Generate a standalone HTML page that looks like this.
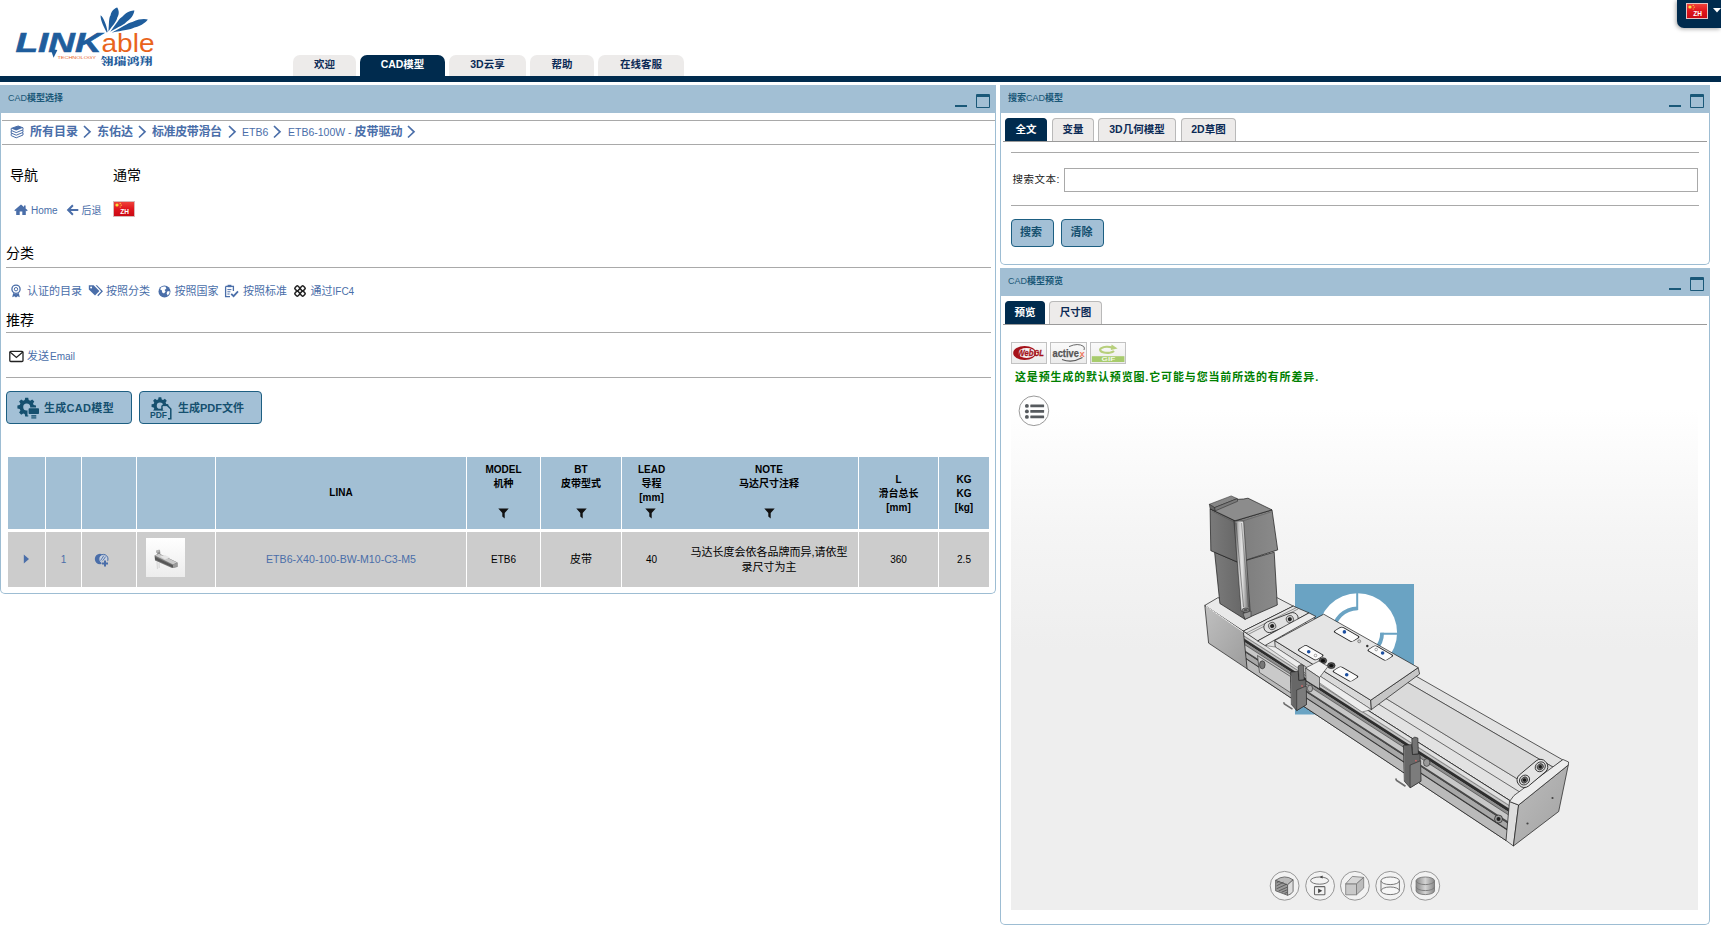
<!DOCTYPE html>
<html lang="zh-CN">
<head>
<meta charset="utf-8">
<title>CAD模型选择</title>
<style>
*{box-sizing:border-box;margin:0;padding:0}
html,body{width:1721px;height:927px;overflow:hidden;background:#fff}
body{position:relative;font-family:"Liberation Sans","Noto Sans CJK SC",sans-serif;font-size:11px;color:#000}
.abs{position:absolute}
a{color:#4a6ea9;text-decoration:none}
/* top */
#rule{left:0;top:76px;width:1721px;height:6px;background:#002b4e}
.mtab{top:55px;height:21px;background:#edebea;border-radius:7px 7px 0 0;color:#0b2a55;font-weight:bold;font-size:10.5px;text-align:center;line-height:19px}
.mtab.on{background:#002b4e;color:#fff;height:22px}
#lang{left:1677px;top:0;width:44px;height:28px;background:#002b4e;border-radius:0 0 0 7px;box-shadow:-1px 1px 4px rgba(0,0,0,.35)}
/* panels */
.panel{border:1px solid #9dbdd3;border-top:none;border-radius:0 0 5px 5px;background:#fff}
.phead{height:28px;background:#a2bfd4;color:#1a5878;font-size:9px;line-height:27px;padding-left:8px}
.pic{background:#1a5878}
.hr{height:1px;background:#a9a9a9}
.h14{font-size:14px;line-height:16px;color:#000}
.lnk{font-size:10.5px;color:#4a6ea9;white-space:nowrap;line-height:12px}
.btn{background:#a3c0d6;border:1px solid #1d5f82;border-radius:4px;color:#15506f;font-weight:bold;font-size:11px;white-space:nowrap}
.stab{height:23px;background:#edebea;border:1px solid #b9b9b9;border-bottom:none;border-radius:4px 4px 0 0;color:#0b2a55;font-weight:bold;font-size:10.5px;text-align:center;line-height:21px;white-space:nowrap}
.stab.on{background:#002b4e;color:#fff;border-color:#002b4e}
.bc .lat{font-size:10.5px;font-weight:normal}
.bc{font-size:12px;font-weight:bold;color:#4a6ea9;line-height:16px;white-space:nowrap}
/* table */
.th{top:457px;height:72px;background:#a2bfd4;font-weight:bold;font-size:10px;line-height:14px;text-align:center;color:#000}
.td{top:532px;height:55px;background:#cccccc;font-size:10px;text-align:center;color:#000;line-height:15px}
</style>
</head>
<body>
<!-- HEADER -->
<div id="logo" class="abs" style="left:0;top:0;width:175px;height:76px">
<svg class="abs" style="left:0;top:0" width="175" height="76" viewBox="0 0 175 76">
<g fill="#1f5d9c">
<path d="M106.8 32.4 C104.5 28 100.2 20.5 100.6 15.2 C103.6 17.5 106.6 25 107.6 32Z"/>
<path d="M108.4 31.6 C112.9 25.0 117.0 21.0 117.2 17.8 C120.0 12.8 118.4 9.5 117.2 7.4 C115.0 8.2 111.6 9.7 110.5 15.4 C108.6 18.0 109.2 23.7 108.4 31.6Z"/>
<path d="M110.2 31.8 C118.7 26.8 124.5 24.7 126.9 21.6 C132.8 17.5 134.0 13.1 134.4 10.6 C131.9 10.6 127.3 11.3 122.5 16.6 C119.1 18.5 116.3 24.1 110.2 31.8Z"/>
<path d="M111.6 32.8 C123.0 30.3 130.3 29.9 134.4 27.6 C142.6 25.3 146.1 21.6 147.8 19.4 C145.1 18.8 140.0 18.3 132.3 21.9 C127.7 22.9 121.9 27.2 111.6 32.8Z"/>
</g>
<text x="15.5" y="52" font-family="Liberation Sans,sans-serif" font-weight="bold" font-style="italic" font-size="28" fill="#1f5d9c" stroke="#1f5d9c" stroke-width=".6" textLength="86" lengthAdjust="spacingAndGlyphs">LINK</text>
<path d="M50.6 49 L53.6 57.8 L57.4 50Z" fill="#1f5d9c"/>
<text x="101.5" y="52" font-family="Liberation Sans,sans-serif" font-size="25.5" fill="#e9641c" textLength="53" lengthAdjust="spacingAndGlyphs">able</text>
<text x="57.4" y="59" font-family="Liberation Sans,sans-serif" font-size="4.2" fill="#e9641c" textLength="38.5" lengthAdjust="spacingAndGlyphs">TECHNOLOGY</text>
<text transform="translate(100.4 65.2) scale(1 .8)" font-family="Noto Serif CJK SC,serif" font-weight="900" font-size="13" fill="#1f5d9c" textLength="52" lengthAdjust="spacingAndGlyphs">翎瑞鸿翔</text>
</svg>
</div><!--/logo-->
<div class="abs mtab" style="left:293px;width:63px">欢迎</div>
<div class="abs mtab on" style="left:360px;width:85px">CAD模型</div>
<div class="abs mtab" style="left:449px;width:77px">3D云享</div>
<div class="abs mtab" style="left:530px;width:64px">帮助</div>
<div class="abs mtab" style="left:598px;width:86px">在线客服</div>
<div id="rule" class="abs"></div>
<div id="lang" class="abs">
<svg class="abs" style="left:9px;top:3px" width="22" height="16" viewBox="0 0 22 16"><rect x=".5" y=".5" width="21" height="15" fill="url(#fg)" stroke="#e5c2c2"/><circle cx="4" cy="4" r="1.6" fill="#ffde3a"/><circle cx="7.2" cy="2.4" r=".6" fill="#ffde3a"/><circle cx="8.2" cy="4.2" r=".6" fill="#ffde3a"/><circle cx="7.2" cy="6" r=".6" fill="#ffde3a"/><text x="11.5" y="13.2" font-family="Liberation Sans,sans-serif" font-weight="bold" font-size="6.5" fill="#fff" text-anchor="middle">ZH</text></svg><svg class="abs" style="left:36px;top:8px" width="8" height="5" viewBox="0 0 8 5"><path d="M0 0 L8 0 L4 4.6Z" fill="#fff"/></svg>
</div><!--/lang-->

<!-- LEFT PANEL -->
<div class="abs phead" style="left:0;top:85px;width:996px">CAD<b>模型选择</b></div>
<div class="abs panel" style="left:0;top:113px;width:996px;height:481px"></div>
<div id="left" class="abs" style="left:0;top:0;width:996px;height:600px">
<!-- panel header icons -->
<div class="abs pic" style="left:955px;top:105px;width:12px;height:2px"></div>
<div class="abs" style="left:976px;top:94px;width:14px;height:14px;border:1.5px solid #1a5878;border-top-width:3.5px;border-radius:1px"></div>
<!-- breadcrumb -->
<div class="abs hr" style="left:2px;top:120px;width:993px"></div>
<div class="abs hr" style="left:2px;top:144px;width:993px"></div>
<svg class="abs" style="left:10px;top:125px" width="14" height="14" viewBox="0 0 14 14"><g fill="#fff" stroke="#4a6ea9" stroke-width="1"><path d="M1.2 8.6 L8.2 6.2 L13 8 L13 10 L6.2 12.8 L1.2 10.6Z"/><path d="M1.2 6 L8.2 3.6 L13 5.4 L13 7.4 L6.2 10.2 L1.2 8Z"/><path d="M1.2 3.4 L8.2 1 L13 2.8 L13 4.8 L6.2 7.6 L1.2 5.4Z"/></g><path d="M1.2 3.4 L8.2 1 L13 2.8 L6.2 5.6Z" fill="#4a6ea9"/></svg>
<div class="abs bc" style="left:30px;top:124px">所有目录</div>
<div class="abs bc" style="left:97px;top:124px">东佑达</div>
<div class="abs bc" style="left:152px;top:124px;letter-spacing:-.4px">标准皮带滑台</div>
<div class="abs bc" style="left:242px;top:124px"><span class="lat">ETB6</span></div>
<div class="abs bc" style="left:288px;top:124px"><span class="lat">ETB6-100W - </span>皮带驱动</div>
<svg class="abs" style="left:0;top:120px" width="430" height="24" viewBox="0 0 430 24"><g fill="none" stroke="#4a6ea9" stroke-width="1.7"><path d="M84 6 L90 11.8 L84 17.5"/><path d="M139 6 L145 11.8 L139 17.5"/><path d="M229 6 L235 11.8 L229 17.5"/><path d="M274 6 L280 11.8 L274 17.5"/><path d="M408 6 L414 11.8 L408 17.5"/></g></svg>
<!-- nav -->
<div class="abs h14" style="left:10px;top:167px">导航</div>
<div class="abs h14" style="left:113px;top:167px">通常</div>
<svg class="abs" style="left:14px;top:204px" width="14" height="12" viewBox="0 0 14 12"><path d="M7 0.6 L0.3 6.3 L1.2 7.3 L2.2 6.5 L2.2 11 L5.7 11 L5.7 7.6 L8.3 7.6 L8.3 11 L11.8 11 L11.8 6.5 L12.8 7.3 L13.7 6.3 L11.6 4.5 L11.6 1.4 L10 1.4 L10 3.1Z" fill="#4a6ea9"/></svg>
<div class="abs lnk" style="left:31px;top:205px;font-size:10px">Home</div>
<svg class="abs" style="left:66px;top:204px" width="13" height="12" viewBox="0 0 13 12"><path d="M6.2 0.6 L7.6 2 L4.7 4.9 L12.3 4.9 L12.3 7.1 L4.7 7.1 L7.6 10 L6.2 11.4 L0.7 6Z" fill="#4a6ea9"/></svg>
<div class="abs lnk" style="left:81.5px;top:205px;font-size:10px">后退</div>
<svg class="abs" style="left:113px;top:201px" width="22" height="16" viewBox="0 0 22 16"><defs><linearGradient id="fg" x1="0" y1="0" x2="0" y2="1"><stop offset="0" stop-color="#f0453c"/><stop offset=".5" stop-color="#e0141c"/><stop offset="1" stop-color="#c80a14"/></linearGradient></defs><rect x=".5" y=".5" width="21" height="15" fill="url(#fg)" stroke="#d9b9b9"/><circle cx="4" cy="4" r="1.6" fill="#ffde3a"/><circle cx="7.2" cy="2.4" r=".6" fill="#ffde3a"/><circle cx="8.2" cy="4.2" r=".6" fill="#ffde3a"/><circle cx="7.2" cy="6" r=".6" fill="#ffde3a"/><text x="11.5" y="13.2" font-family="Liberation Sans,sans-serif" font-weight="bold" font-size="6.5" fill="#fff" text-anchor="middle">ZH</text></svg>
<!-- classification -->
<div class="abs h14" style="left:6px;top:245px">分类</div>
<div class="abs hr" style="left:6px;top:267px;width:985px"></div>
<svg class="abs" style="left:10px;top:284px" width="12" height="14" viewBox="0 0 12 14"><circle cx="6" cy="5.2" r="4.1" fill="none" stroke="#4a6ea9" stroke-width="1.3"/><circle cx="6" cy="5.2" r="1.7" fill="none" stroke="#4a6ea9" stroke-width="1"/><path d="M3.2 9 L2.2 13.3 L4.4 12.2 L6 13.6 L7.6 12.2 L9.8 13.3 L8.8 9 L6 10.2Z" fill="#4a6ea9"/></svg>
<div class="abs lnk" style="left:27px;top:285px;font-size:11px">认证的目录</div>
<svg class="abs" style="left:88px;top:284px" width="16" height="14" viewBox="0 0 16 14"><path d="M0.8 1.2 L5.6 1.2 L11.4 7 L7 11.6 L0.8 5.6Z" fill="#4a6ea9"/><path d="M7.6 1.2 L9 1.2 L15 7.2 L10.2 12.2 L9.3 11.3 L13.2 7.2Z" fill="#4a6ea9"/><circle cx="3.1" cy="3.4" r="1" fill="#fff"/></svg>
<div class="abs lnk" style="left:106px;top:285px;font-size:11px">按照分类</div>
<svg class="abs" style="left:158px;top:285px" width="13" height="13" viewBox="0 0 13 13"><circle cx="6.5" cy="6.5" r="6" fill="#4a6ea9"/><path d="M3 2.6 Q5 1 7.4 1.6 L8.4 3.4 L6.6 5 L7.6 6.6 L6 8.6 L4.2 7.4 L3.8 5.2 L2.2 4.4Z M9.2 6.4 L11.4 6 L11.6 8 L9.8 10.4 L8.6 8.6Z" fill="#fff"/></svg>
<div class="abs lnk" style="left:174.5px;top:285px;font-size:11px">按照国家</div>
<svg class="abs" style="left:224px;top:284px" width="15" height="14" viewBox="0 0 15 14"><path d="M1.6 2.4 L9.4 2.4 L9.4 7 M1.6 2.4 L1.6 12.6 L6 12.6" fill="none" stroke="#4a6ea9" stroke-width="1.3"/><rect x="3.6" y=".8" width="3.8" height="2.4" fill="#4a6ea9"/><path d="M3.4 5.6h4M3.4 7.8h3M3.4 10h2.2" stroke="#4a6ea9" stroke-width="1"/><path d="M7.2 9.8 L9.6 12.2 L14 7.4" fill="none" stroke="#4a6ea9" stroke-width="1.8"/></svg>
<div class="abs lnk" style="left:243px;top:285px;font-size:11px">按照标准</div>
<svg class="abs" style="left:293px;top:284px" width="14" height="14" viewBox="0 0 14 14"><g fill="none" stroke="#222" stroke-width="1.5"><rect x="2.2" y="2.2" width="4.2" height="4.2" rx="1.2" transform="rotate(45 4.3 4.3)"/><rect x="7.6" y="2.2" width="4.2" height="4.2" rx="1.2" transform="rotate(45 9.7 4.3)"/><rect x="2.2" y="7.6" width="4.2" height="4.2" rx="1.2" transform="rotate(45 4.3 9.7)"/><rect x="7.6" y="7.6" width="4.2" height="4.2" rx="1.2" transform="rotate(45 9.7 9.7)"/></g></svg>
<div class="abs lnk" style="left:310.5px;top:285px;font-size:11px">通过<span style="font-size:10px">IFC4</span></div>
<!-- recommend -->
<div class="abs h14" style="left:6px;top:312px">推荐</div>
<div class="abs hr" style="left:6px;top:332px;width:985px"></div>
<svg class="abs" style="left:9px;top:350px" width="15" height="13" viewBox="0 0 15 13"><rect x=".8" y="1.3" width="13.2" height="10.2" rx="1" fill="#fff" stroke="#222" stroke-width="1.3"/><path d="M1 2 L7.4 7.4 L13.8 2" fill="none" stroke="#222" stroke-width="1.3"/></svg>
<div class="abs lnk" style="left:27px;top:350px;font-size:11px">发送<span style="font-size:10px;margin-left:1px">Email</span></div>
<div class="abs hr" style="left:6px;top:377px;width:985px"></div>
<!-- buttons -->
<div class="abs btn" style="left:6px;top:391px;width:126px;height:33px;line-height:32px;padding-left:37px;letter-spacing:.3px">生成CAD模型</div>
<div class="abs btn" style="left:139px;top:391px;width:123px;height:33px;line-height:32px;padding-left:38px">生成PDF文件</div>
<svg class="abs" style="left:17px;top:397px" width="23" height="22" viewBox="0 0 23 22"><g fill="#15506f"><path id="gear" d="M8.2 0.8h3l.5 2.3 1.5.7 2-1.3 2.1 2.1-1.3 2 .7 1.5 2.3.5v3l-2.3.5-.7 1.5 1.3 2-2.1 2.1-2-1.3-1.5.7-.5 2.3h-3l-.5-2.3-1.5-.7-2 1.3-2.1-2.1 1.3-2-.7-1.5-2.3-.5v-3l2.3-.5.7-1.5-1.3-2 2.1-2.1 2 1.3 1.5-.7z M9.7 6.6a3.5 3.5 0 1 0 0 7a3.5 3.5 0 1 0 0-7z" fill-rule="evenodd"/></g><rect x="10.5" y="10.5" width="12" height="8" fill="#a3c0d6"/><rect x="11.6" y="11.3" width="10.4" height="5.8" rx=".8" fill="#15506f"/><rect x="14.3" y="18.2" width="5" height="1.4" fill="#15506f"/><rect x="14.3" y="20.3" width="5" height="1.2" fill="#15506f"/></svg>
<svg class="abs" style="left:150px;top:396px" width="23" height="24" viewBox="0 0 23 24"><path d="M8.2 0.8h3l.5 2.3 1.5.7 2-1.3 2.1 2.1-1.3 2 .7 1.5 2.3.5v3l-2.3.5-.7 1.5 1.3 2-2.1 2.1-2-1.3-1.5.7-.5 2.3h-3l-.5-2.3-1.5-.7-2 1.3-2.1-2.1 1.3-2-.7-1.5-2.3-.5v-3l2.3-.5.7-1.5-1.3-2 2.1-2.1 2 1.3 1.5-.7z M9.7 6.6a3.5 3.5 0 1 0 0 7a3.5 3.5 0 1 0 0-7z" fill="#15506f" fill-rule="evenodd" transform="translate(1.2 .6) scale(.9)"/><rect x="0" y="14.6" width="23" height="9.4" fill="#a3c0d6"/><path d="M12 9.6 L17.4 9.6 L20.8 13 L20.8 22.8 L18 22.8 M12 9.6 L12 14.6" fill="#a3c0d6" stroke="#15506f" stroke-width="1.5"/><path d="M12.8 10.4 L17 10.4 L20 13.4 L20 14.6 L12.8 14.6Z" fill="#a3c0d6"/><text x="0" y="22.2" font-family="Liberation Sans,sans-serif" font-weight="bold" font-size="8.2" fill="#15506f" textLength="17" lengthAdjust="spacingAndGlyphs">PDF</text></svg>
</div>

<!-- TABLE -->
<div id="tbl" class="abs" style="left:0;top:0;width:996px;height:0">
<div class="abs th" style="left:8px;width:37px;"></div>
<div class="abs th" style="left:46px;width:35px;"></div>
<div class="abs th" style="left:82px;width:54px;"></div>
<div class="abs th" style="left:137px;width:78px;"></div>
<div class="abs th" style="left:216px;width:250px;"><div style="margin-top:29px">LINA</div></div>
<div class="abs th" style="left:467px;width:73px;"><div style="margin-top:6px">MODEL<br>机种</div><svg class="abs" style="left:50%;margin-left:-5.5px;top:50.6px" width="11" height="11" viewBox="0 0 11 11"><path d="M0.3 0.6 L10.7 0.6 L6.7 5 L6.7 10.6 L4.3 8.6 L4.3 5Z" fill="#111"/></svg></div>
<div class="abs th" style="left:541px;width:80px;"><div style="margin-top:5.5px">BT<br>皮带型式</div><svg class="abs" style="left:50%;margin-left:-5.5px;top:50.6px" width="11" height="11" viewBox="0 0 11 11"><path d="M0.3 0.6 L10.7 0.6 L6.7 5 L6.7 10.6 L4.3 8.6 L4.3 5Z" fill="#111"/></svg></div>
<div class="abs th" style="left:622px;width:236px;"><div class="abs" style="left:0;width:59px;top:5.5px">LEAD<br>导程<br>[mm]</div><svg class="abs" style="left:23px;top:50.6px" width="11" height="11" viewBox="0 0 11 11"><path d="M0.3 0.6 L10.7 0.6 L6.7 5 L6.7 10.6 L4.3 8.6 L4.3 5Z" fill="#111"/></svg><div class="abs" style="left:59px;width:176px;top:5.5px">NOTE<br>马达尺寸注释</div><svg class="abs" style="left:141.5px;top:50.6px" width="11" height="11" viewBox="0 0 11 11"><path d="M0.3 0.6 L10.7 0.6 L6.7 5 L6.7 10.6 L4.3 8.6 L4.3 5Z" fill="#111"/></svg></div>
<div class="abs th" style="left:859px;width:79px;"><div style="margin-top:16px">L<br>滑台总长<br>[mm]</div></div>
<div class="abs th" style="left:939px;width:50px;"><div style="margin-top:16px">KG<br>KG<br>[kg]</div></div>
<div class="abs td" style="left:8px;width:37px;"><svg class="abs" style="left:15px;top:22px" width="7" height="10" viewBox="0 0 7 10"><path d="M0.8 0.5 L6 5 L0.8 9.5Z" fill="#4a6ea9"/></svg></div>
<div class="abs td" style="left:46px;width:35px;"><div style="margin-top:20px;color:#4a6ea9">1</div></div>
<div class="abs td" style="left:82px;width:54px;"><svg class="abs" style="left:12px;top:21px" width="16" height="15" viewBox="0 0 16 15"><circle cx="6" cy="6" r="5.2" fill="#4a6ea9"/><circle cx="9.4" cy="6" r="4.6" fill="#c6d0df" stroke="#4a6ea9" stroke-width="1"/><path d="M6.6 7.6 L9.8 2.6 M8.2 8.6 L11.6 3.6" stroke="#4a6ea9" stroke-width=".9"/><circle cx="11" cy="10.6" r="3.5" fill="#cccccc"/><path d="M11 7.6v6M8 10.6h6" stroke="#4a6ea9" stroke-width="2"/></svg></div>
<div class="abs td" style="left:137px;width:78px;"><svg class="abs" style="left:9px;top:6px" width="39" height="39" viewBox="0 0 39 39"><defs><linearGradient id="tg" x1="0" y1="0" x2="0" y2="1"><stop offset="0" stop-color="#fff"/><stop offset="1" stop-color="#ececec"/></linearGradient></defs><rect width="39" height="39" fill="url(#tg)"/><path d="M11 13 L14 12 L14.5 18 L11.5 19Z" fill="#8a8a8a"/><path d="M10 12.5 L13.5 11.5 L13.5 14 L10 15Z" fill="#b5b5b5"/><path d="M8.5 17.5 L13 15.5 L31.5 24.5 L31.5 29 L26 30 L9 22.5Z" fill="#777"/><path d="M9 17.5 L13 15.8 L31 24.6 L27 26.4Z" fill="#c9c9c9"/><path d="M14 18.5 L19 17 L24 19.5 L19 21.5Z" fill="#e6e6e6"/><path d="M9 19 L27 27.5 L27 29.5 L9 21.5Z" fill="#555"/><path d="M11 24 L11.5 31 M13 25 L13.2 30" stroke="#d8d8d8" stroke-width="1.2"/><path d="M27 26.5 L31.5 24.8 L31.5 28.6 L27 30Z" fill="#9a9a9a"/></svg></div>
<div class="abs td" style="left:216px;width:250px;"><div style="margin-top:20px;color:#4a6ea9;font-size:10.6px">ETB6-X40-100-BW-M10-C3-M5</div></div>
<div class="abs td" style="left:467px;width:73px;"><div style="margin-top:20px">ETB6</div></div>
<div class="abs td" style="left:541px;width:80px;"><div style="margin-top:20px;font-size:11px">皮带</div></div>
<div class="abs td" style="left:622px;width:236px;"><div class="abs" style="left:0;width:59px;top:20px">40</div><div class="abs" style="left:59px;width:176px;top:13px;font-size:11px;line-height:15.3px;white-space:nowrap">马达长度会依各品牌而异,请依型<br>录尺寸为主</div></div>
<div class="abs td" style="left:859px;width:79px;"><div style="margin-top:20px">360</div></div>
<div class="abs td" style="left:939px;width:50px;"><div style="margin-top:20px">2.5</div></div>
</div>

<!-- SEARCH PANEL -->
<div class="abs phead" style="left:1000px;top:85px;width:710px"><b>搜索</b>CAD<b>模型</b></div>
<div class="abs panel" style="left:1000px;top:113px;width:710px;height:152px"></div>
<div id="search" class="abs" style="left:0;top:0;width:0;height:0">
<div class="abs pic" style="left:1669px;top:105px;width:12px;height:2px"></div>
<div class="abs" style="left:1690px;top:94px;width:14px;height:14px;border:1.5px solid #1a5878;border-top-width:3.5px;border-radius:1px"></div>
<div class="abs" style="left:1003px;top:141px;width:704px;height:1px;background:#9a9a9a"></div>
<div class="abs stab on" style="left:1005px;top:118px;width:42px">全文</div>
<div class="abs stab" style="left:1052px;top:118px;width:42px">变量</div>
<div class="abs stab" style="left:1098px;top:118px;width:78px">3D几何模型</div>
<div class="abs stab" style="left:1181px;top:118px;width:55px">2D草图</div>
<div class="abs hr" style="left:1011px;top:152px;width:688px"></div>
<div class="abs" style="left:1012.5px;top:172px;font-size:10.5px;line-height:14px;color:#222;letter-spacing:.5px;white-space:nowrap">搜索文本:</div>
<div class="abs" style="left:1064px;top:168px;width:634px;height:24px;border:1px solid #a9a9a9;background:#fff"></div>
<div class="abs hr" style="left:1011px;top:205px;width:688px"></div>
<div class="abs btn" style="left:1011px;top:219px;width:43px;height:28px;line-height:25px;text-align:center;padding-right:3px">搜索</div>
<div class="abs btn" style="left:1061px;top:219px;width:43px;height:28px;line-height:25px;text-align:center;padding-right:2px">清除</div>
</div>

<!-- PREVIEW PANEL -->
<div class="abs phead" style="left:1000px;top:268px;width:710px">CAD<b>模型预览</b></div>
<div class="abs panel" style="left:1000px;top:296px;width:710px;height:629px"></div>
<div id="preview" class="abs" style="left:0;top:0;width:0;height:0">
<div class="abs pic" style="left:1669px;top:288px;width:12px;height:2px"></div>
<div class="abs" style="left:1690px;top:277px;width:14px;height:14px;border:1.5px solid #1a5878;border-top-width:3.5px;border-radius:1px"></div>
<div class="abs" style="left:1003px;top:324px;width:704px;height:1px;background:#9a9a9a"></div>
<div class="abs stab on" style="left:1005px;top:301px;width:40px">预览</div>
<div class="abs stab" style="left:1049px;top:301px;width:53px">尺寸图</div>
<!-- viewer buttons -->
<div id="vbtns" class="abs" style="left:1011px;top:342px;width:116px;height:22px">
<div class="abs" style="left:0;top:0;width:36px;height:22px;border:1px solid #c2c2c2;background:linear-gradient(#fafafa,#ececec)"></div>
<div class="abs" style="left:39px;top:0;width:37px;height:22px;border:1px solid #c2c2c2;background:linear-gradient(#fafafa,#ececec)"></div>
<div class="abs" style="left:79px;top:0;width:36px;height:22px;border:1px solid #c2c2c2;background:linear-gradient(#fafafa,#ececec)"></div>
<svg class="abs" style="left:0;top:0" width="116" height="22" viewBox="0 0 116 22"><ellipse cx="13.6" cy="11" rx="11.4" ry="7" fill="#a5121a"/><ellipse cx="15.6" cy="11" rx="8.6" ry="5" fill="#f6f3f3"/><text x="6.6" y="14.4" font-family="Liberation Sans,sans-serif" font-weight="bold" font-style="italic" font-size="9.6" fill="#a5121a" stroke="#a5121a" stroke-width=".3" textLength="26.4" lengthAdjust="spacingAndGlyphs">WebGL</text><path d="M58 4.6 Q67 0.6 72.6 4.4 Q74 6 73 8" fill="none" stroke="#6a6a6a" stroke-width="1"/><path d="M51 17.4 Q61 21.5 71.5 15.6" fill="none" stroke="#5a5a5a" stroke-width="1.1"/><text x="41.6" y="14.6" font-family="Liberation Sans,sans-serif" font-weight="bold" font-size="10" fill="#555" stroke="#555" stroke-width=".25" textLength="26.2" lengthAdjust="spacingAndGlyphs">active</text><text x="68.4" y="14.6" font-family="Liberation Sans,sans-serif" font-weight="bold" font-size="9.4" fill="#ee7a62">x</text><rect x="80.8" y="14.2" width="32.6" height="5.8" fill="#a7cb6c"/><text x="90.6" y="19.2" font-family="Liberation Sans,sans-serif" font-weight="bold" font-size="6" fill="#f3f9e6" textLength="13.6" lengthAdjust="spacingAndGlyphs">GIF</text><path d="M103 9 A7.2 3 0 1 1 101 5.6" fill="none" stroke="#b7cf7c" stroke-width="2.1"/><path d="M100.6 2.4 L106.6 6.4 L99.8 8Z" fill="#b7cf7c"/></svg>
</div><!--/vbtns-->
<div class="abs" style="left:1015px;top:370px;font-size:11px;line-height:14px;font-weight:bold;color:#008000;white-space:nowrap;letter-spacing:.85px">这是预生成的默认预览图.它可能与您当前所选的有所差异.</div>
<div id="viewer" class="abs" style="left:1011px;top:388px;width:687px;height:522px;background:linear-gradient(#fff 0%,#fff 4%,#f5f5f5 27%,#eeeeee 50%,#eeeeee 100%);overflow:hidden">
<svg class="abs" style="left:0;top:0" width="687" height="522" viewBox="1011 388 687 522">
<defs><linearGradient id="mL" x1="0" y1="0" x2="1" y2="0"><stop offset="0" stop-color="#7a7a7a"/><stop offset="1" stop-color="#666"/></linearGradient><linearGradient id="mR" x1="0" y1="0" x2="1" y2="0"><stop offset="0" stop-color="#7c7c7c"/><stop offset="1" stop-color="#8a8a8a"/></linearGradient><linearGradient id="mS" x1="0" y1="0" x2="1" y2="0"><stop offset="0" stop-color="#4a4a4a"/><stop offset=".3" stop-color="#c4c4c4"/><stop offset=".5" stop-color="#e4e4e4"/><stop offset=".75" stop-color="#9a9a9a"/><stop offset="1" stop-color="#585858"/></linearGradient><linearGradient id="bL" x1="0" y1="0" x2="1" y2="1"><stop offset="0" stop-color="#c0c0c0"/><stop offset="1" stop-color="#9c9c9c"/></linearGradient><linearGradient id="cap" x1="0" y1="0" x2="1" y2="1"><stop offset="0" stop-color="#bdbdbd"/><stop offset="1" stop-color="#a2a2a2"/></linearGradient></defs>
<rect x="1295" y="584" width="119" height="130.5" fill="#6aa3c3"/>
<circle cx="1357.7" cy="632.7" r="39.4" fill="#fff"/>
<path d="M1382.1 632.7 A24.4 24.4 0 1 1 1357.7 608.3" fill="none" stroke="#6aa3c3" stroke-width="3.8"/>
<path d="M1357.2 593 V610 M1380.4 633.7 H1398" stroke="#6aa3c3" stroke-width="2"/>
<path d="M1243.3 631.1 L1293.2 606.1 L1562.6 759.8 L1510.8 801.2Z" fill="#e2e2e2" stroke="#1a1a1a" stroke-width="0.7" stroke-linejoin="round"/>
<path d="M1253.3 626.1 L1521.2 792.9" fill="none" stroke="#333" stroke-width="0.7"/>
<path d="M1261.3 622.1 L1529.4 786.3" fill="none" stroke="#555" stroke-width="0.7"/>
<path d="M1284.2 610.6 L1553.3 767.3" fill="none" stroke="#333" stroke-width="0.7"/>
<path d="M1261.3 622.1 L1284.2 610.6 L1553.3 767.3 L1529.4 786.3Z" fill="#dadada"/>
<path d="M1261.3 622.1 L1529.4 786.3" fill="none" stroke="#444" stroke-width="0.7"/>
<path d="M1284.2 610.6 L1553.3 767.3" fill="none" stroke="#333" stroke-width="0.7"/>
<path d="M1243.3 631.1 L1510.8 801.2 L1506.0 840.5 L1247.1 668.8Z" fill="#bcbcbc" stroke="#1a1a1a" stroke-width="0.7" stroke-linejoin="round"/>
<path d="M1243.3 631.1 L1510.8 801.2 L1510.3 805.5 L1243.7 635.2Z" fill="#e2e2e2"/>
<path d="M1243.7 635.2 L1510.3 805.5 L1509.8 809.1 L1244.1 638.6Z" fill="#c6c6c6"/>
<path d="M1244.1 638.6 L1509.8 809.1 L1509.4 812.6 L1244.4 642.0Z" fill="#2e2e2e"/>
<path d="M1244.4 642.0 L1509.4 812.6 L1509.0 815.7 L1244.7 645.0Z" fill="#8e8e8e"/>
<path d="M1244.7 645.0 L1509.0 815.7 L1508.3 821.6 L1245.3 650.7Z" fill="#c8c8c8"/>
<path d="M1245.3 650.7 L1508.3 821.6 L1508.0 824.0 L1245.5 653.0Z" fill="#474747"/>
<path d="M1245.5 653.0 L1508.0 824.0 L1507.4 829.1 L1246.0 657.9Z" fill="#a8a8a8"/>
<path d="M1246.0 657.9 L1507.4 829.1 L1507.2 830.7 L1246.1 659.4Z" fill="#3a3a3a"/>
<path d="M1246.1 659.4 L1507.2 830.7 L1506.0 840.5 L1247.1 668.8Z" fill="#bababa"/>
<path d="M1243.3 631.1 L1510.8 801.2" fill="none" stroke="#1a1a1a" stroke-width="0.7"/>
<path d="M1247.1 668.8 L1506.0 840.5" fill="none" stroke="#1a1a1a" stroke-width="0.7"/>
<path d="M1243.8 636.0 L1510.2 806.3" fill="none" stroke="#444" stroke-width="0.5"/>
<path d="M1244.7 644.7 L1509.1 815.3" fill="none" stroke="#333" stroke-width="0.5"/>
<path d="M1509.5 801.5 L1518.6 805.0 L1513.4 846.0 L1506.0 840.5Z" fill="#dedede" stroke="#1a1a1a" stroke-width="0.7" stroke-linejoin="round"/>
<path d="M1518.6 805.0 L1568.3 765.0 L1558.7 811.5 L1513.4 846.0Z" fill="url(#cap)" stroke="#1a1a1a" stroke-width="0.7" stroke-linejoin="round"/>
<path d="M1509.5 801.5 L1514.0 795.5 L1563.0 759.5 L1568.6 762.0 L1568.3 765.0 L1518.6 805.0Z" fill="#ededed" stroke="#1a1a1a" stroke-width="0.7" stroke-linejoin="round"/>
<circle cx="1552.5" cy="798" r="1.1" fill="#444"/><circle cx="1527.5" cy="823.5" r="1.1" fill="#444"/>
<g transform="translate(1532.4 773.4) rotate(-40)"><rect x="-17.6" y="-7.2" width="35.2" height="14.4" rx="6.6" fill="#e4e4e4" stroke="#1a1a1a" stroke-width=".8"/><ellipse cx="-10.3" cy="0" rx="5.4" ry="4.6" fill="#d4d4d4" stroke="#222" stroke-width=".8"/><ellipse cx="-10.3" cy="0" rx="3.3" ry="2.8" fill="#777" stroke="#222" stroke-width=".6"/><circle cx="-10.3" cy="0" r="1.7" fill="#1a1a1a"/><ellipse cx="10.3" cy="0" rx="5.4" ry="4.6" fill="#d4d4d4" stroke="#222" stroke-width=".8"/><ellipse cx="10.3" cy="0" rx="3.3" ry="2.8" fill="#777" stroke="#222" stroke-width=".6"/><circle cx="10.3" cy="0" r="1.7" fill="#1a1a1a"/></g>
<circle cx="1498.5" cy="819" r="4" fill="#999" stroke="#222" stroke-width=".7"/><circle cx="1498.5" cy="819" r="2" fill="#222"/>
<path d="M1204.8 605.4 L1208.6 643.1 L1247.1 668.8 L1243.3 631.1Z" fill="url(#bL)" stroke="#1a1a1a" stroke-width="0.7" stroke-linejoin="round"/>
<path d="M1204.8 605.4 L1217.7 597.8 L1277.3 597.8 L1293.2 606.1 L1243.3 631.1Z" fill="#e9e9e9" stroke="#1a1a1a" stroke-width="0.7" stroke-linejoin="round"/>
<path d="M1206.0 606.3 L1243.6 632.2" fill="none" stroke="#ececec" stroke-width="1"/>
<path d="M1243.3 631.1 L1293.2 606.1 L1309.0 612.9 L1257.7 640.9Z" fill="#e4e4e4" stroke="#1a1a1a" stroke-width="0.7" stroke-linejoin="round"/>
<path d="M1246.0 633.2 L1296.0 607.8" fill="none" stroke="#555" stroke-width="0.6"/>
<path d="M1248.0 634.5 L1298.0 609.0" fill="none" stroke="#555" stroke-width="0.6"/>
<g transform="translate(1281 622.6) rotate(-21)"><rect x="-18" y="-5.6" width="36" height="11.2" rx="5.6" fill="#e0e0e0" stroke="#1a1a1a" stroke-width=".7"/><circle cx="-9.5" cy="0" r="3.6" fill="#c8c8c8" stroke="#222" stroke-width=".6"/><circle cx="-9.5" cy="0" r="2" fill="#222"/><circle cx="9.5" cy="0" r="3.6" fill="#c8c8c8" stroke="#222" stroke-width=".6"/><circle cx="9.5" cy="0" r="2" fill="#222"/></g>
<path d="M1257.7 640.9 L1309.0 612.9 L1316.0 616.5 L1265.0 645.5Z" fill="#ececec" stroke="#1a1a1a" stroke-width="0.7" stroke-linejoin="round"/>
<path d="M1257.5 655.5 L1259.5 672.5 L1291.0 693.0 L1290.5 676.5Z" fill="#c9c9c9" stroke="#222" stroke-width="0.6" stroke-linejoin="round"/>
<ellipse cx="1262.3" cy="664.8" rx="2.8" ry="4" fill="#777" stroke="#222" stroke-width=".6"/>
<path d="M1274.7 640.6 L1370.7 700.2 L1371.4 709.6 L1275.2 647.0Z" fill="#d9d9d9" stroke="#1a1a1a" stroke-width="0.7" stroke-linejoin="round"/>
<path d="M1370.7 700.2 L1418.2 667.6 L1419.6 674.0 L1371.4 709.6Z" fill="#c6c6c6" stroke="#1a1a1a" stroke-width="0.7" stroke-linejoin="round"/>
<path d="M1274.7 640.6 L1323.7 614.2 L1418.2 667.6 L1370.7 700.2Z" fill="#e5e5e5" stroke="#1a1a1a" stroke-width="0.7" stroke-linejoin="round"/>
<path d="M1265.0 645.5 L1275.2 647.0 L1371.4 709.6 L1362.0 712.0Z" fill="#ededed" stroke="#444" stroke-width="0.5" stroke-linejoin="round"/>
<g transform="translate(1346.6 634.3) rotate(30) skewX(-28)"><rect x="-10.5" y="-4.25" width="21" height="8.5" rx="2" fill="#fbfbfb" stroke="#222" stroke-width=".8"/></g>
<g transform="translate(1380.3 653) rotate(30) skewX(-28)"><rect x="-10.5" y="-4.25" width="21" height="8.5" rx="2" fill="#fbfbfb" stroke="#222" stroke-width=".8"/></g>
<g transform="translate(1310.7 652.7) rotate(30) skewX(-28)"><rect x="-10.5" y="-4.25" width="21" height="8.5" rx="2" fill="#fbfbfb" stroke="#222" stroke-width=".8"/></g>
<g transform="translate(1345.5 674) rotate(30) skewX(-28)"><rect x="-10.5" y="-4.25" width="21" height="8.5" rx="2" fill="#fbfbfb" stroke="#222" stroke-width=".8"/></g>
<circle cx="1344.4" cy="631.9" r="1.8" fill="#1c4fa0"/>
<circle cx="1382.6" cy="653" r="1.8" fill="#1c4fa0"/>
<circle cx="1308.7" cy="651.8" r="1.8" fill="#1c4fa0"/>
<circle cx="1346.7" cy="674.8" r="1.8" fill="#1c4fa0"/>
<circle cx="1376.2" cy="649.5" r="1.3" fill="#fff" stroke="#555" stroke-width=".5"/>
<circle cx="1315.5" cy="655.5" r="1.3" fill="#fff" stroke="#555" stroke-width=".5"/>
<circle cx="1359.2" cy="641.3" r="1.5" fill="#ccc" stroke="#444" stroke-width=".5"/><circle cx="1367.3" cy="646" r="1.2" fill="#333"/>
<ellipse cx="1322.9" cy="660.7" rx="3.8" ry="3" fill="#555" stroke="#111" stroke-width=".6"/><ellipse cx="1322.9" cy="660.7" rx="2.2" ry="1.7" fill="#111"/>
<ellipse cx="1331.3" cy="665.6" rx="3.8" ry="3" fill="#555" stroke="#111" stroke-width=".6"/><ellipse cx="1331.3" cy="665.6" rx="2.2" ry="1.7" fill="#111"/>
<path d="M1305.5 668.0 L1319.0 661.0 L1328.0 666.5 L1319.5 677.5Z" fill="#f0f0f0" stroke="#222" stroke-width="0.6" stroke-linejoin="round"/>
<path d="M1305.5 668.0 L1319.5 677.5 L1319.5 689.0 L1306.0 680.5Z" fill="#bdbdbd" stroke="#222" stroke-width="0.6" stroke-linejoin="round"/>
<ellipse cx="1310" cy="688.5" rx="2.6" ry="3.4" fill="#aaa" stroke="#222" stroke-width=".6"/>
<path d="M1290.6 672.1 L1298.2 671.4 L1298.9 680.4 L1305.7 679.7 L1306.5 704.6 L1296.7 710.6 L1291.4 704.6Z" fill="#676767" stroke="#1c1c1c" stroke-width="0.6" stroke-linejoin="round"/><path d="M1298.2 666.1 L1301.0 664.5 L1303.8 665.5 L1304.2 679.7 L1298.9 680.4Z" fill="#747474" stroke="#1c1c1c" stroke-width="0.6" stroke-linejoin="round"/><path d="M1296.7 690.0 L1306.3 686.0 L1306.5 704.6 L1296.7 710.6Z" fill="#7c7c7c" stroke="#1c1c1c" stroke-width="0.5" stroke-linejoin="round"/><path d="M1291.3 676.0 L1291.8 704.0" fill="none" stroke="#8a8a8a" stroke-width="0.6"/><path d="M1283.6 702.2 L1284.4 704.0 L1292.5 709.2" fill="none" stroke="#6c6c6c" stroke-width="1.6"/><circle cx="1302.0" cy="686.0" r=".9" fill="#c66"/>
<path d="M1403.4 745.4 L1411.8 744.6 L1412.5 754.5 L1420.0 753.8 L1420.9 781.2 L1410.1 787.8 L1404.3 781.2Z" fill="#676767" stroke="#1c1c1c" stroke-width="0.6" stroke-linejoin="round"/><path d="M1411.8 738.8 L1414.8 737.1 L1417.9 738.1 L1418.4 753.8 L1412.5 754.5Z" fill="#747474" stroke="#1c1c1c" stroke-width="0.6" stroke-linejoin="round"/><path d="M1410.1 765.1 L1420.7 760.7 L1420.9 781.2 L1410.1 787.8Z" fill="#7c7c7c" stroke="#1c1c1c" stroke-width="0.5" stroke-linejoin="round"/><path d="M1404.2 749.7 L1404.7 780.5" fill="none" stroke="#8a8a8a" stroke-width="0.6"/><path d="M1395.7 778.5 L1396.6 780.5 L1405.5 786.2" fill="none" stroke="#6c6c6c" stroke-width="1.7600000000000002"/><circle cx="1415.9" cy="760.7" r=".9" fill="#c66"/>
<ellipse cx="1426.7" cy="762.6" rx="3.2" ry="3.8" fill="#999" stroke="#222" stroke-width=".6"/>
<path d="M1214.6 552.2 L1238.5 562.5 L1245.0 619.3 L1219.9 603.5Z" fill="url(#mL)" stroke="#1a1a1a" stroke-width="0.7" stroke-linejoin="round"/>
<path d="M1238.5 562.5 L1274.2 552.2 L1277.3 605.0 L1251.0 616.5 L1245.0 619.3Z" fill="url(#mR)" stroke="#1a1a1a" stroke-width="0.7" stroke-linejoin="round"/>
<path d="M1243.0 613.5 L1251.0 611.0 L1251.0 616.5 L1245.0 619.3Z" fill="#9a9a9a" stroke="#222" stroke-width="0.5" stroke-linejoin="round"/>
<path d="M1210.1 508.8 L1235.0 520.8 L1238.5 562.5 L1210.8 550.7Z" fill="url(#mL)" stroke="#1a1a1a" stroke-width="0.7" stroke-linejoin="round"/>
<path d="M1235.0 520.8 L1272.0 509.9 L1277.7 549.9 L1238.5 562.5Z" fill="url(#mR)" stroke="#1a1a1a" stroke-width="0.7" stroke-linejoin="round"/>
<path d="M1210.1 508.8 L1233.5 499.6 L1243.5 499.0 L1248.0 498.2 L1272.0 509.9 L1235.0 520.8Z" fill="#8c8c8c" stroke="#1a1a1a" stroke-width="0.7" stroke-linejoin="round"/>
<path d="M1209.3 504.3 L1231.2 495.9 L1237.3 498.6 L1214.6 507.6Z" fill="#868686" stroke="#222" stroke-width="0.5" stroke-linejoin="round"/>
<path d="M1214.6 507.6 L1237.3 498.6 L1237.6 501.3 L1214.9 511.0Z" fill="#7a7a7a" stroke="#222" stroke-width="0.5" stroke-linejoin="round"/>
<path d="M1209.3 504.3 L1214.6 507.6 L1214.9 511.0 L1210.1 508.8Z" fill="#636363" stroke="#222" stroke-width="0.5" stroke-linejoin="round"/>
<path d="M1212.6 511.4 L1236.0 523.2 L1270.8 512.0" fill="none" stroke="#555" stroke-width="0.5"/>
<path d="M1233.9 520.8 L1243.6 521.2 L1250.2 610.5 L1241.2 611.0Z" fill="url(#mS)" stroke="#222" stroke-width="0.5" stroke-linejoin="round"/>
<path d="M1236.0 523.0 L1243.5 607.0" fill="none" stroke="#3a3a3a" stroke-width="0.5"/>
<path d="M1241.5 523.0 L1248.5 607.0" fill="none" stroke="#3a3a3a" stroke-width="0.4"/>
<ellipse cx="1245.6" cy="610.2" rx="3.6" ry="2.1" fill="#8a8a8a" stroke="#222" stroke-width=".5"/><ellipse cx="1245.6" cy="610.2" rx="2" ry="1.1" fill="#555"/>
<circle cx="1284.6" cy="885.8" r="14.4" fill="#f2f2f2" stroke="#8c8c8c" stroke-width=".9"/>
<circle cx="1320.1" cy="885.8" r="14.4" fill="#f2f2f2" stroke="#8c8c8c" stroke-width=".9"/>
<circle cx="1354.9" cy="885.8" r="14.4" fill="#f2f2f2" stroke="#8c8c8c" stroke-width=".9"/>
<circle cx="1390.2" cy="885.8" r="14.4" fill="#f2f2f2" stroke="#8c8c8c" stroke-width=".9"/>
<circle cx="1425.3" cy="885.8" r="14.4" fill="#f2f2f2" stroke="#8c8c8c" stroke-width=".9"/>
<g transform="translate(1284.6 885.8)"><path d="M-9 -5.5 L-9 5 L3 9.5 L3 -1Z" fill="#9a9a9a" stroke="#555" stroke-width=".8"/><path d="M-9 -5.5 Q0 -12 8.5 -6 L3 -1Z" fill="#bbb" stroke="#555" stroke-width=".8"/><path d="M3 -1 L8.5 -6 L8.5 5.5 Q7 8.5 3 9.5Z" fill="#ddd" stroke="#555" stroke-width=".8"/><path d="M-8 -3 L-5 -4.6 M-8 0 L-1 -3.6 M-8 3 L2 -1.6 M-6 5.2 L2.6 1.4 M-3 6.4 L2.6 4 M0 7.6 L2.6 6.6" stroke="#444" stroke-width=".7"/></g>
<g transform="translate(1320.1 885.8)" fill="none" stroke="#666" stroke-width=".9"><ellipse cx="-.5" cy="-5.2" rx="9" ry="3.6"/><path d="M2.5 -10.3 L-.6 -8.9 L2.5 -7.4Z" fill="#444" stroke="none"/><rect x="-5.6" y=".8" width="10.4" height="8.2" rx=".8" stroke-width="1.1"/><path d="M-2 2.6 L2.2 5 L-2 7.4Z" fill="#444" stroke="none"/></g>
<g transform="translate(1354.9 885.8)" stroke="#777" stroke-width=".8"><path d="M-9.2 -2 L1.6 -2 L1.6 9 L-9.2 9Z" fill="#c9c9c9"/><path d="M-9.2 -2 L-2.6 -9.4 L8.8 -8.4 L1.6 -2Z" fill="#d6d6d6"/><path d="M1.6 -2 L8.8 -8.4 L8.8 2.2 L1.6 9Z" fill="#bcbcbc"/></g>
<g transform="translate(1390.2 885.8)" fill="none" stroke="#777" stroke-width="1"><ellipse cx="0" cy="-5" rx="9.2" ry="3.8" fill="#f6f6f6"/><ellipse cx="0" cy="5" rx="9.2" ry="3.8" fill="#f6f6f6"/><path d="M-9.2 -5 V5 M9.2 -5 V5"/></g>
<defs><linearGradient id="cyl" x1="0" y1="0" x2="1" y2="0"><stop offset="0" stop-color="#888"/><stop offset=".5" stop-color="#d4d4d4"/><stop offset="1" stop-color="#888"/></linearGradient></defs><g transform="translate(1425.3 885.8)" stroke="#777" stroke-width=".9"><path d="M-9.2 -5 V5 A9.2 3.8 0 0 0 9.2 5 V-5Z" fill="url(#cyl)"/><ellipse cx="0" cy="-5" rx="9.2" ry="3.8" fill="url(#cyl)"/><path d="M-9.2 1 A9.2 3.8 0 0 0 9.2 1" fill="none"/></g>
<circle cx="1033.9" cy="410.8" r="14.8" fill="#fefefe" stroke="#9a9a9a" stroke-width="1"/>
<circle cx="1026.9" cy="405.9" r="1.95" fill="#565a5e"/><rect x="1030.3" y="404.5" width="13.8" height="2.8" rx=".5" fill="#565a5e"/>
<circle cx="1026.9" cy="411.4" r="1.95" fill="#565a5e"/><rect x="1030.3" y="410.0" width="13.8" height="2.8" rx=".5" fill="#565a5e"/>
<circle cx="1026.9" cy="416.9" r="1.95" fill="#565a5e"/><rect x="1030.3" y="415.5" width="13.8" height="2.8" rx=".5" fill="#565a5e"/>
</svg>
</div><!--/viewer-->
</div>
</body>
</html>
